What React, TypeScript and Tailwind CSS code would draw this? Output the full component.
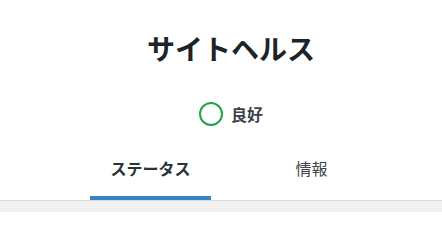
import React from "react";

export default function App() {
  return (
    <div
      className="w-[442px] h-[212px] bg-white flex flex-col overflow-hidden"
      style={{ fontFamily: '"Noto Sans CJK JP", "Noto Sans", sans-serif' }}
    >
      <div className="pl-5 flex flex-col items-center">
        <h1 className="pt-[34px] text-[28px] leading-[28px] font-bold text-[#1d2327]">
          サイトヘルス
        </h1>
        <div className="mt-[40px] h-[24px] flex items-center gap-2">
          <div className="w-6 h-6 rounded-full border-2 border-[#1ea54b]" />
          <span className="text-[16px] leading-6 font-semibold text-[#3c434a]">良好</span>
        </div>
        <nav className="mt-[22px] grid grid-cols-2">
          <a className="mx-5 w-[121px] pt-2 pb-4 text-center text-[16px] leading-6 font-semibold text-[#2c3338] border-b-4 border-[#3582c4]">
            ステータス
          </a>
          <a className="mx-5 w-[121px] pt-2 pb-4 text-center text-[16px] leading-6 text-[#3c434a] border-b-4 border-transparent">
            情報
          </a>
        </nav>
      </div>
      <div className="flex-1 bg-[#f0f0f1] border-t border-[#dcdcde]" />
    </div>
  );
}
